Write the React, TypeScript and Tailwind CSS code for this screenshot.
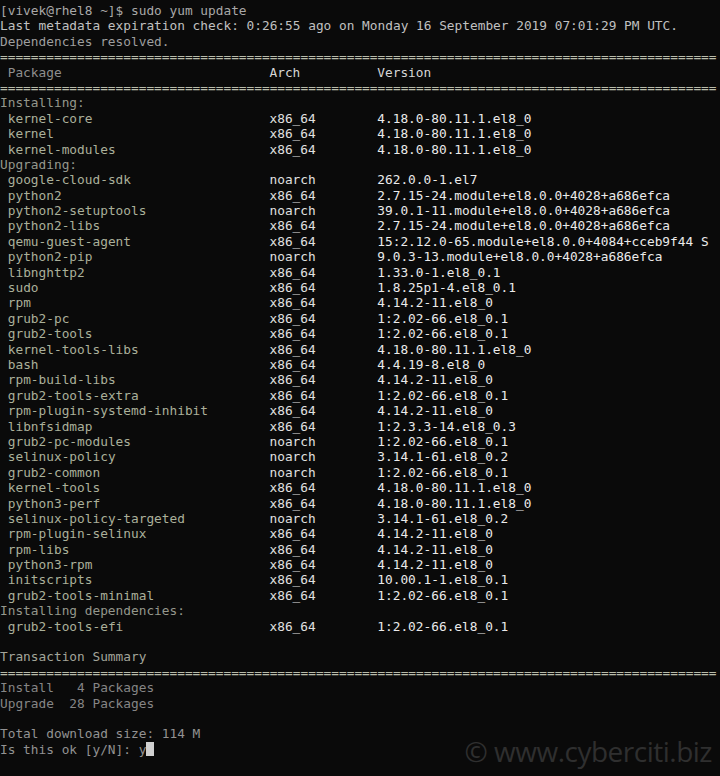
const SEP = '='.repeat(93);

type Row = { name: string; arch: string; version: string };

const installing: Row[] = [
  { name: 'kernel-core', arch: 'x86_64', version: '4.18.0-80.11.1.el8_0' },
  { name: 'kernel', arch: 'x86_64', version: '4.18.0-80.11.1.el8_0' },
  { name: 'kernel-modules', arch: 'x86_64', version: '4.18.0-80.11.1.el8_0' },
];

const upgrading: Row[] = [
  { name: 'google-cloud-sdk', arch: 'noarch', version: '262.0.0-1.el7' },
  { name: 'python2', arch: 'x86_64', version: '2.7.15-24.module+el8.0.0+4028+a686efca' },
  { name: 'python2-setuptools', arch: 'noarch', version: '39.0.1-11.module+el8.0.0+4028+a686efca' },
  { name: 'python2-libs', arch: 'x86_64', version: '2.7.15-24.module+el8.0.0+4028+a686efca' },
  { name: 'qemu-guest-agent', arch: 'x86_64', version: '15:2.12.0-65.module+el8.0.0+4084+cceb9f44 S' },
  { name: 'python2-pip', arch: 'noarch', version: '9.0.3-13.module+el8.0.0+4028+a686efca' },
  { name: 'libnghttp2', arch: 'x86_64', version: '1.33.0-1.el8_0.1' },
  { name: 'sudo', arch: 'x86_64', version: '1.8.25p1-4.el8_0.1' },
  { name: 'rpm', arch: 'x86_64', version: '4.14.2-11.el8_0' },
  { name: 'grub2-pc', arch: 'x86_64', version: '1:2.02-66.el8_0.1' },
  { name: 'grub2-tools', arch: 'x86_64', version: '1:2.02-66.el8_0.1' },
  { name: 'kernel-tools-libs', arch: 'x86_64', version: '4.18.0-80.11.1.el8_0' },
  { name: 'bash', arch: 'x86_64', version: '4.4.19-8.el8_0' },
  { name: 'rpm-build-libs', arch: 'x86_64', version: '4.14.2-11.el8_0' },
  { name: 'grub2-tools-extra', arch: 'x86_64', version: '1:2.02-66.el8_0.1' },
  { name: 'rpm-plugin-systemd-inhibit', arch: 'x86_64', version: '4.14.2-11.el8_0' },
  { name: 'libnfsidmap', arch: 'x86_64', version: '1:2.3.3-14.el8_0.3' },
  { name: 'grub2-pc-modules', arch: 'noarch', version: '1:2.02-66.el8_0.1' },
  { name: 'selinux-policy', arch: 'noarch', version: '3.14.1-61.el8_0.2' },
  { name: 'grub2-common', arch: 'noarch', version: '1:2.02-66.el8_0.1' },
  { name: 'kernel-tools', arch: 'x86_64', version: '4.18.0-80.11.1.el8_0' },
  { name: 'python3-perf', arch: 'x86_64', version: '4.18.0-80.11.1.el8_0' },
  { name: 'selinux-policy-targeted', arch: 'noarch', version: '3.14.1-61.el8_0.2' },
  { name: 'rpm-plugin-selinux', arch: 'x86_64', version: '4.14.2-11.el8_0' },
  { name: 'rpm-libs', arch: 'x86_64', version: '4.14.2-11.el8_0' },
  { name: 'python3-rpm', arch: 'x86_64', version: '4.14.2-11.el8_0' },
  { name: 'initscripts', arch: 'x86_64', version: '10.00.1-1.el8_0.1' },
  { name: 'grub2-tools-minimal', arch: 'x86_64', version: '1:2.02-66.el8_0.1' },
];

const deps: Row[] = [
  { name: 'grub2-tools-efi', arch: 'x86_64', version: '1:2.02-66.el8_0.1' },
];

function Line({ children, className = '' }: { children?: React.ReactNode; className?: string }) {
  return <div className={`h-[15.4px] ${className}`}>{children ?? ' '}</div>;
}

function PkgRow({ row }: { row: Row }) {
  return (
    <div className="h-[15.4px] flex">
      <span className="w-[269.5px] shrink-0 text-[#aab09a]"> {row.name}</span>
      <span className="w-[107.8px] shrink-0 text-[#e0e0e0]">{row.arch}</span>
      <span className="text-[#ebebeb]">{row.version}</span>
    </div>
  );
}

function Section({ title, rows }: { title: string; rows: Row[] }) {
  return (
    <>
      <Line className="text-[#94978c]">{title}</Line>
      {rows.map((r) => (
        <PkgRow key={r.name} row={r} />
      ))}
    </>
  );
}

export default function App() {
  return (
    <div className="relative w-[720px] h-[776px] overflow-hidden bg-[#0a0a0a]">
      <div className="pt-[3px] whitespace-pre text-[12.8px] leading-[15.4px] font-['DejaVu_Sans_Mono',monospace] text-[#c8c8c8]">
        <Line className="text-[#a8a8a8]">[vivek@rhel8 ~]$ sudo yum update</Line>
        <Line className="text-[#c0c0c0]">Last metadata expiration check: 0:26:55 ago on Monday 16 September 2019 07:01:29 PM UTC.</Line>
        <Line className="text-[#9e9e9e]">Dependencies resolved.</Line>
        <Line className="text-[#b9bcab]">{SEP}</Line>
        <div className="h-[15.4px] flex">
          <span className="w-[269.5px] shrink-0 text-[#8e8e8e]"> Package</span>
          <span className="w-[107.8px] shrink-0 text-[#d6d6d6]">Arch</span>
          <span className="text-[#d6d6d6]">Version</span>
        </div>
        <Line className="text-[#b9bcab]">{SEP}</Line>
        <Section title="Installing:" rows={installing} />
        <Section title="Upgrading:" rows={upgrading} />
        <Section title="Installing dependencies:" rows={deps} />
        <Line />
        <Line className="text-[#a3a59a]">Transaction Summary</Line>
        <Line className="text-[#b9bcab]">{SEP}</Line>
        <Line className="text-[#858585]">Install   4 Packages</Line>
        <Line className="text-[#858585]">Upgrade  28 Packages</Line>
        <Line />
        <Line className="text-[#929292]">Total download size: 114 M</Line>
        <div className="h-[15.4px] flex items-center text-[#929292]">
          <span>Is this ok [y/N]: y</span>
          <span className="inline-block w-[7.7px] h-[14px] bg-[#d0d0d0]" />
        </div>
      </div>
      <div className="absolute right-[8px] bottom-[11px] font-['Open_Sans',sans-serif] text-[28px] leading-none text-[#2f2f2f] tracking-[-0.5px]">
        © www.cyberciti.biz
      </div>
    </div>
  );
}
